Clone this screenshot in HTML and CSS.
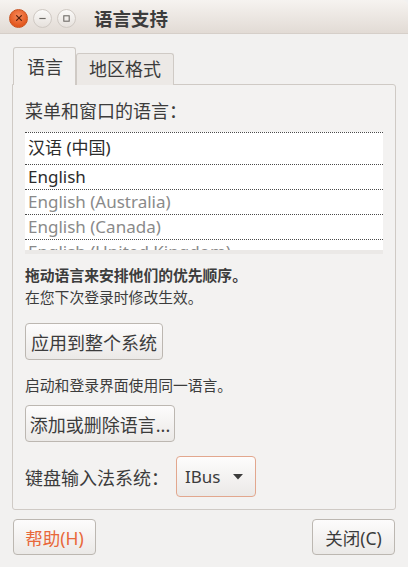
FILE: index.html
```html
<!DOCTYPE html>
<html lang="zh-CN">
<head>
<meta charset="utf-8">
<title>语言支持</title>
<link rel="stylesheet" href="styles.css">
</head>
<body>
<div class="window">
  <header class="titlebar">
    <div class="controls">
      <span class="wbtn close">
        <svg viewBox="0 0 10 10" width="8" height="8"><path d="M2 2 L8 8 M8 2 L2 8" stroke="#5b2310" stroke-width="1.6" stroke-linecap="round"/></svg>
      </span>
      <span class="wbtn">
        <svg viewBox="0 0 10 10" width="9" height="9"><path d="M1.5 5 H8.5" stroke="#6d6a66" stroke-width="1.3"/></svg>
      </span>
      <span class="wbtn">
        <svg viewBox="0 0 10 10" width="9" height="9"><rect x="2" y="2" width="6" height="6" fill="none" stroke="#6d6a66" stroke-width="1.2"/></svg>
      </span>
    </div>
    <h1 class="title">语言支持</h1>
  </header>

  <main class="content">
    <div class="tabs">
      <div class="tab active">语言</div>
      <div class="tab">地区格式</div>
    </div>
    <section class="panel">
      <div class="label">菜单和窗口的语言：</div>
      <div class="list">
        <div class="row first">汉语 (中国)</div>
        <div class="row">English</div>
        <div class="row dim">English (Australia)</div>
        <div class="row dim">English (Canada)</div>
        <div class="row dim">English (United Kingdom)</div>
      </div>
      <div class="note bold">拖动语言来安排他们的优先顺序。</div>
      <div class="note">在您下次登录时修改生效。</div>
      <button class="btn apply">应用到整个系统</button>
      <div class="note gap">启动和登录界面使用同一语言。</div>
      <button class="btn addrm">添加或删除语言...</button>
      <div class="imrow">
        <span class="imlabel">键盘输入法系统：</span>
        <button class="btn combo">IBus <svg class="arrow" viewBox="0 0 10 6" width="10" height="6"><path d="M0 0 H10 L5 5.5 Z" fill="#3c3c3c"/></svg></button>
      </div>
    </section>
    <div class="actions">
      <button class="btn help">帮助(H)</button>
      <button class="btn closebtn">关闭(C)</button>
    </div>
  </main>
</div>
</body>
</html>
```

FILE: styles.css
```css
html, body {
  margin: 0;
  padding: 0;
}
body {
  width: 408px;
  height: 567px;
  overflow: hidden;
  background: #f2f1f0;
  font-family: "Noto Sans", "Noto Sans CJK SC", sans-serif;
  color: #3c3c3c;
  font-size: 18px;
  white-space: nowrap;
}
.window {
  display: flex;
  flex-direction: column;
  height: 567px;
}
.titlebar {
  height: 33px;
  border-bottom: 1px solid #d6cfc9;
  background: linear-gradient(#f6f3f0, #e2dbd5);
  display: flex;
  align-items: center;
  padding-left: 9px;
  border-top-right-radius: 6px;
}
.controls {
  display: flex;
  gap: 5px;
  margin-top: 3px;
}
.wbtn {
  width: 19px;
  height: 19px;
  border-radius: 50%;
  box-sizing: border-box;
  display: flex;
  align-items: center;
  justify-content: center;
  border: 1px solid #cfc9c3;
  background: linear-gradient(#fbfaf9, #e6e1dc);
}
.wbtn.close {
  border: 1px solid #c9521f;
  background: radial-gradient(circle at 50% 35%, #f7895a, #e3581f 70%);
}
.title {
  margin: 3px 0 0 18px;
  font-size: 18.5px;
  font-weight: bold;
  color: #3c3c3c;
}
.content {
  padding: 13px 12px 0 12px;
  display: flex;
  flex-direction: column;
}
.tabs {
  display: flex;
  align-items: flex-end;
  margin-left: 1px;
  position: relative;
  z-index: 1;
  margin-bottom: -1px;
}
.tab {
  box-sizing: border-box;
  border: 1px solid #cfcac5;
  border-bottom: none;
  border-radius: 3px 3px 0 0;
  padding: 0 12px 0 12px;
  height: 32px;
  line-height: 30px;
  background: #ece9e6;
}
.tab.active {
  height: 38px;
  line-height: 38px;
  background: #f3f2f1;
  padding: 0 12px 0 13px;
}
.panel {
  border: 1px solid #cfcac5;
  border-radius: 0 3px 3px 3px;
  background: #f3f2f1;
  padding: 14px 12px 12px 12px;
  display: flex;
  flex-direction: column;
  align-items: flex-start;
}
.label {
  line-height: 24px;
}
.list {
  align-self: stretch;
  margin-top: 9px;
  height: 122px;
  overflow: hidden;
  background: #fff;
  border-bottom: 4px solid #ebe9e7;
  box-sizing: border-box;
  font-size: 17px;
}
.row {
  height: 25px;
  line-height: 23px;
  border-bottom: 1px dotted #4a4a4a;
  box-sizing: border-box;
  padding-left: 3px;
  color: #2c2c2c;
}
.row.first {
  height: 33px;
  line-height: 30px;
  border-top: 1px dotted #4a4a4a;
}
.row.dim {
  color: #8a8a8a;
}
.note {
  font-size: 14.8px;
  line-height: 22px;
}
.note.bold {
  font-weight: bold;
  margin-top: 10px;
}
.note.gap {
  margin-top: 14px;
}
.btn {
  font-family: inherit;
  font-size: 18px;
  color: #3c3c3c;
  height: 37px;
  box-sizing: border-box;
  border: 1px solid #bcb7b1;
  border-radius: 4px;
  background: linear-gradient(#fdfcfc, #ebe9e7);
  padding: 0 2px;
  display: inline-flex;
  align-items: center;
  justify-content: center;
  white-space: nowrap;
}
.apply {
  margin-top: 15px;
  width: 138px;
}
.addrm {
  margin-top: 9px;
  width: 150px;
}
.imrow {
  margin-top: 14px;
  display: flex;
  align-items: center;
  gap: 7px;
}
.combo {
  height: 41px;
  width: 80px;
  border-color: #e2a78e;
  justify-content: flex-start;
  padding-left: 8px;
  font-size: 17px;
}
.arrow {
  margin-left: 13px;
}
.actions {
  display: flex;
  justify-content: space-between;
  margin-top: 9px;
  padding: 0 1px;
}
.help, .closebtn {
  width: 83px;
  height: 36px;
  font-size: 17.5px;
}
.help {
  color: #e8683a;
}
```
